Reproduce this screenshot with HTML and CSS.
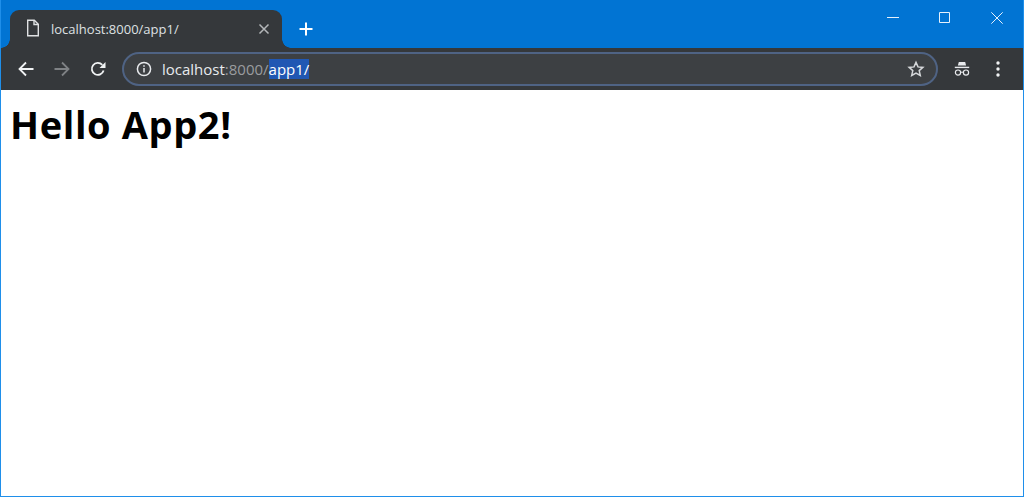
FILE: index.html
```html
<!DOCTYPE html>
<html lang="en">
<head>
<meta charset="utf-8">
<title>localhost:8000/app1/</title>
<link rel="stylesheet" href="styles.css">
</head>
<body>
<div class="window">
  <div class="titlebar">
    <div class="tab">
      <svg class="tab-icon" width="16" height="18" viewBox="0 0 16 18" fill="none" stroke="#dfe1e3" stroke-width="1.4"><path d="M2.7 1.2h6.6l4 4v11.6H2.7z"/><path d="M9 1.2v4.3h4.3"/></svg>
      <span class="tab-title">localhost:8000/app1/</span>
      <svg class="tab-close" width="12" height="12" viewBox="0 0 12 12" stroke="#b4b7ba" stroke-width="1.5"><path d="M1.5 1.5l9 9M10.5 1.5l-9 9"/></svg>
    </div>
    <svg class="new-tab" width="14" height="14" viewBox="0 0 14 14" stroke="#fff" stroke-width="2"><path d="M7 .5v13M.5 7h13"/></svg>
    <div class="window-controls">
      <svg class="win-btn" width="12" height="12" viewBox="0 0 12 12" stroke="#e6f1fb" stroke-width="1"><path d="M0 5.5h12"/></svg>
      <svg class="win-btn" width="12" height="12" viewBox="0 0 12 12" fill="none" stroke="#e6f1fb" stroke-width="1"><path d="M.5.5h10v10H.5z"/></svg>
      <svg class="win-btn" width="12" height="12" viewBox="0 0 12 12" stroke="#e6f1fb" stroke-width="1"><path d="M.3.3l11.4 11.4M11.7.3L.3 11.7"/></svg>
    </div>
  </div>
  <div class="toolbar">
    <div class="nav">
      <svg width="16" height="16" viewBox="0 0 16 16" fill="none" stroke="#f1f3f4" stroke-width="1.8"><path d="M15.5 8H1.5M8 1.5L1.5 8 8 14.5"/></svg>
      <svg width="16" height="16" viewBox="0 0 16 16" fill="none" stroke="#7f8285" stroke-width="1.8"><path d="M.5 8h14M8 1.5L14.5 8 8 14.5"/></svg>
      <svg width="16" height="16" viewBox="0 0 16 16" fill="none"><path d="M13.6 9.6a6 6 0 1 1-1.3-5.7" stroke="#f1f3f4" stroke-width="1.8"/><path d="M15.5 1v6h-6z" fill="#f1f3f4"/></svg>
    </div>
    <div class="omnibox">
      <svg class="info" width="16" height="16" viewBox="0 0 16 16" fill="none" stroke="#e8eaed" stroke-width="1.5"><circle cx="8" cy="8" r="6.6"/><path d="M8 7v4.6"/><path d="M8 4.2v1.6"/></svg>
      <div class="url"><span class="host">localhost</span><span class="muted">:8000/</span><span class="selected">app1/</span></div>
      <svg class="star" width="18" height="18" viewBox="0 0 18 18" fill="none" stroke="#d5d7da" stroke-width="1.5"><path d="M9 2.4l2 4.5 4.9.5-3.7 3.2 1.1 4.8L9 13l-4.3 2.4 1.1-4.8-3.7-3.2 4.9-.5z"/></svg>
    </div>
    <div class="tools">
      <svg width="16" height="16" viewBox="0 0 16 16" fill="none"><path d="M4.8 1h6.4l.9 3.4H3.9z" fill="#e8eaed"/><path d="M.8 6.4h14.4" stroke="#e8eaed" stroke-width="1.4"/><circle cx="4" cy="11.6" r="2.6" stroke="#e8eaed" stroke-width="1.2"/><circle cx="12" cy="11.6" r="2.6" stroke="#e8eaed" stroke-width="1.2"/><path d="M6.6 11.2h2.8" stroke="#e8eaed" stroke-width="1"/></svg>
      <svg width="4" height="16" viewBox="0 0 4 16" fill="#f1f3f4"><circle cx="2" cy="2" r="1.7"/><circle cx="2" cy="8" r="1.7"/><circle cx="2" cy="14" r="1.7"/></svg>
    </div>
  </div>
  <main class="content">
    <h1 class="heading">Hello App2!</h1>
  </main>
</div>
</body>
</html>
```
FILE: styles.css
```css
html, body {
  margin: 0;
  padding: 0;
  height: 100%;
  overflow: hidden;
}

.window {
  box-sizing: border-box;
  height: 497px;
  width: 1024px;
  display: flex;
  flex-direction: column;
  border: 1px solid #1f8fea;
  border-top: 0;
  background: #fff;
  font-family: "Open Sans", "Noto Sans", sans-serif;
}

.titlebar {
  height: 48px;
  flex: none;
  display: flex;
  align-items: flex-start;
  padding-left: 9px;
  background: #0174d3;
}

.tab {
  position: relative;
  box-sizing: border-box;
  width: 272px;
  height: 38px;
  margin-top: 10px;
  padding: 0 12px 0 15px;
  display: flex;
  align-items: center;
  background: #35383b;
  border-radius: 9px 9px 0 0;
  color: #dfe1e3;
  font-size: 13px;
}

.tab::before,
.tab::after {
  content: "";
  position: absolute;
  bottom: 0;
  width: 9px;
  height: 9px;
}

.tab::before {
  left: -9px;
  background: radial-gradient(circle at 0 0, transparent 8.5px, #35383b 9px);
}

.tab::after {
  right: -9px;
  background: radial-gradient(circle at 100% 0, transparent 8.5px, #35383b 9px);
}

.tab-icon {
  flex: none;
  margin-top: -3px;
}

.tab-title {
  flex: 1;
  margin-left: 10px;
  margin-top: -1px;
}

.tab-close {
  flex: none;
  margin-top: -1px;
}

.new-tab {
  flex: none;
  margin: 22px 0 0 17px;
}

.window-controls {
  margin-left: auto;
  margin-top: 12px;
  margin-right: 20px;
  display: flex;
  gap: 40px;
}

.toolbar {
  height: 42px;
  flex: none;
  display: flex;
  align-items: center;
  background: #35383b;
}

.nav {
  flex: none;
  display: flex;
  align-items: center;
  gap: 20px;
  padding-left: 17px;
}

.omnibox {
  box-sizing: border-box;
  flex: none;
  width: 816px;
  height: 34px;
  margin-left: 16px;
  padding: 0 11px 0 12px;
  display: flex;
  align-items: center;
  background: #3d4043;
  border: 2px solid #4f6384;
  border-radius: 17px;
  color: #e8eaed;
  font-size: 15px;
}

.info {
  flex: none;
}

.url {
  flex: 1;
  margin-left: 10px;
  white-space: nowrap;
}

.muted {
  color: #9a9c9f;
}

.selected {
  display: inline-block;
  background: #2057b3;
  color: #fff;
}

.star {
  flex: none;
}

.tools {
  flex: none;
  display: flex;
  align-items: center;
  gap: 26px;
  padding-left: 16px;
}

.content {
  flex: 1;
  padding: 12px 9px;
}

.heading {
  margin: 0;
  font-family: "Open Sans", "Noto Sans", sans-serif;
  font-size: 38px;
  letter-spacing: 0.6px;
  line-height: 44px;
  font-weight: 700;
  color: #000;
}
```
